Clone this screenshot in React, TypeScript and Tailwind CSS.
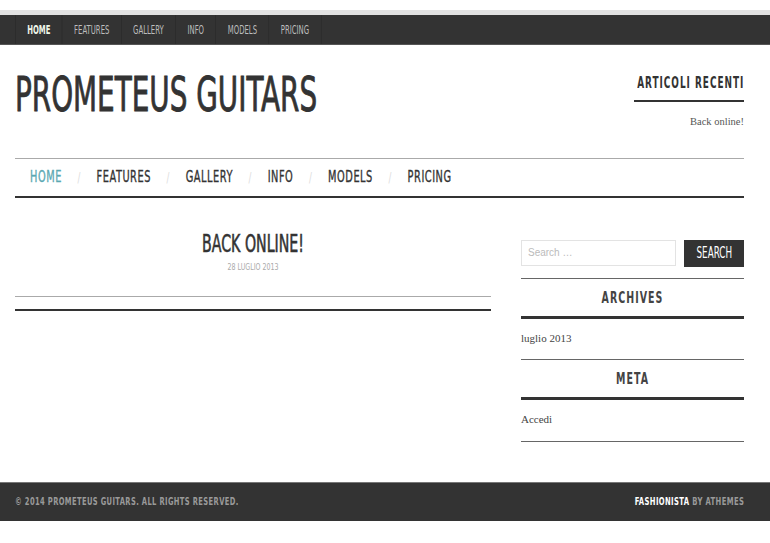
const cond = "font-['Liberation_Sans_Narrow','DejaVu_Sans_Condensed',sans-serif]";
const serif = "font-['Liberation_Serif','DejaVu_Serif',serif]";

const items = ["HOME", "FEATURES", "GALLERY", "INFO", "MODELS", "PRICING"];

function TopBar() {
  return (
    <div className="pt-[10px]">
      <div className="border-t-[5px] border-b border-t-[#e2e2e2] border-b-[#555] bg-[#333] h-[35px] pl-[15px]">
        <ul className={`flex h-full origin-left scale-x-[0.64] ${cond} text-[12px]`}>
          {items.map((t, i) => (
            <li
              key={t}
              className={`flex h-full items-center border-r border-[#2a2a2a] px-[18px] ${i === 0 ? "border-l font-bold text-[#eef5e8]" : "text-[#bdbdbd]"}`}
            >
              {t}
            </li>
          ))}
        </ul>
      </div>
    </div>
  );
}

function Header() {
  return (
    <div className="flex justify-between pl-[15px] pr-[26px] pt-[22px]">
      <h1 className={`${cond} text-[48px] leading-none text-[#333] mt-[3px] whitespace-nowrap inline-block origin-left scale-x-[0.645] [-webkit-text-stroke:0.9px_#333]`}>
        PROMETEUS GUITARS
      </h1>
      <div className="flex flex-col items-end w-[110px]">
        <div className={`${cond} font-bold text-[15px] tracking-[1.5px] text-[#333] leading-none mt-[9px] whitespace-nowrap origin-right scale-x-[0.66]`}>
          ARTICOLI RECENTI
        </div>
        <div className="w-full h-[2px] bg-[#333] mt-[9px]" />
        <div className={`${serif} text-[10.5px] text-[#555] mt-[12px]`}>Back online!</div>
      </div>
    </div>
  );
}

function MainNav() {
  return (
    <div className="ml-[15px] mr-[26px] mt-[28px] border-t border-b-2 border-t-[#aaa] border-b-[#333] h-[40px] flex items-center pl-[15px]">
      <div className={`flex items-center origin-left scale-x-[0.68] ${cond} text-[16px] tracking-[0.8px]`}>
        {items.map((t, i) => (
          <div key={t} className="flex items-center">
            {i > 0 && <span className="text-[#ddd] text-[14px] px-[23px]">/</span>}
            <span className={`[-webkit-text-stroke:0.35px_currentColor] ${i === 0 ? "text-[#5aa8b2]" : "text-[#333]"}`}>{t}</span>
          </div>
        ))}
      </div>
    </div>
  );
}

function Post() {
  return (
    <div className="w-[476px]">
      <div className="pt-[33px] text-center">
        <h2 className={`${cond} text-[25px] leading-none text-[#333] whitespace-nowrap scale-x-[0.63] [-webkit-text-stroke:0.6px_#333]`}>BACK ONLINE!</h2>
        <div className={`${cond} text-[9px] text-[#aaa] mt-[5px] scale-x-[0.78]`}>28 LUGLIO 2013</div>
      </div>
      <div className="mt-[22px] border-t border-[#aaa]" />
      <div className="mt-[12px] border-t-2 border-[#333]" />
    </div>
  );
}

function WidgetTitle({ children }: { children: string }) {
  return (
    <div className={`${cond} font-bold text-center text-[15px] tracking-[1.5px] text-[#444] pt-[12px] pb-[10px] leading-none scale-x-[0.7]`}>
      {children}
    </div>
  );
}

function Sidebar() {
  return (
    <div className="w-[223px] pt-[42px]">
      <div className="flex gap-2">
        <input
          placeholder="Search …"
          className="font-['Liberation_Sans',sans-serif] w-[155px] h-[26px] border border-[#e3e3e3] px-[6px] text-[10px] placeholder:text-[#bbb] outline-none"
        />
        <button className={`w-[60px] h-[27px] bg-[#333] text-white text-[15px] ${cond}`}>
          <span className="inline-block scale-x-[0.65]">SEARCH</span>
        </button>
      </div>
      <div className="mt-[11px] border-t border-[#666]" />
      <WidgetTitle>ARCHIVES</WidgetTitle>
      <div className="border-t-[3px] border-[#333]" />
      <div className={`${serif} text-[11px] text-[#444] pt-[11px] pb-[13px]`}>luglio 2013</div>
      <div className="border-t border-[#666]" />
      <WidgetTitle>META</WidgetTitle>
      <div className="border-t-[3px] border-[#333]" />
      <div className={`${serif} text-[11px] text-[#444] pt-[11px] pb-[13px]`}>Accedi</div>
      <div className="border-t border-[#666]" />
    </div>
  );
}

function Footer() {
  return (
    <div className={`mt-[40px] border-t border-[#777] bg-[#333] h-[39px] flex items-center justify-between pl-[15px] pr-[26px] ${cond} font-bold text-[10px] tracking-[0.5px]`}>
      <span className="text-[#9a9a9a] whitespace-nowrap origin-left scale-x-[0.75]">© 2014 PROMETEUS GUITARS. ALL RIGHTS RESERVED.</span>
      <span className="text-[#9a9a9a] whitespace-nowrap origin-right scale-x-[0.76]">
        <span className="text-white">FASHIONISTA</span> BY ATHEMES
      </span>
    </div>
  );
}

export default function App() {
  return (
    <div className="w-[770px] min-h-[543px] bg-white">
      <TopBar />
      <Header />
      <MainNav />
      <div className="flex justify-between pl-[15px] pr-[26px]">
        <Post />
        <Sidebar />
      </div>
      <Footer />
    </div>
  );
}
